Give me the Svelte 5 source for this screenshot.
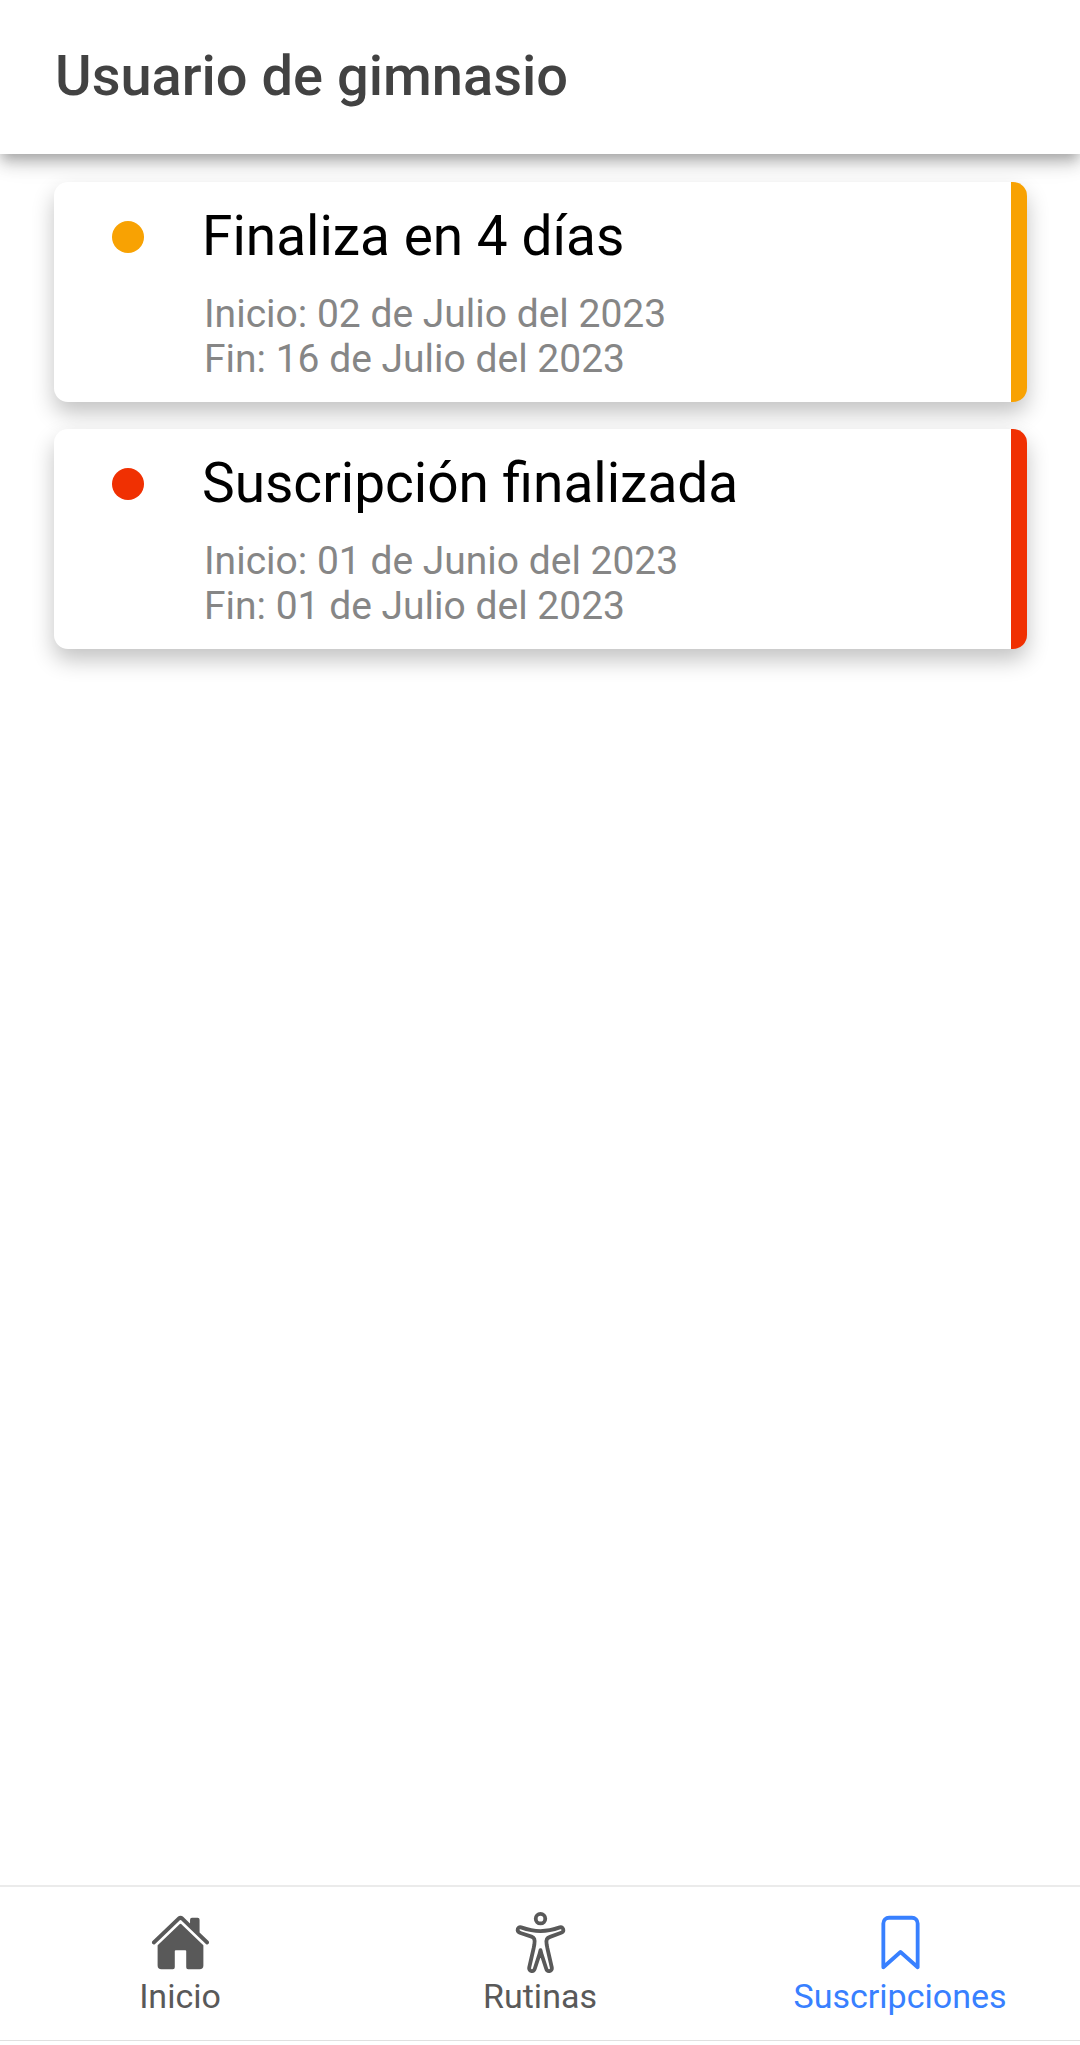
<script lang="ts">
  type Status = 'ending' | 'ended';

  const subscriptions: { status: Status; title: string; start: string; end: string }[] = [
    {
      status: 'ending',
      title: 'Finaliza en 4 días',
      start: '02 de Julio del 2023',
      end: '16 de Julio del 2023',
    },
    {
      status: 'ended',
      title: 'Suscripción finalizada',
      start: '01 de Junio del 2023',
      end: '01 de Julio del 2023',
    },
  ];
</script>

<div class="page">
  <header class="toolbar">
    <h1>Usuario de gimnasio</h1>
  </header>

  <main class="content">
    {#each subscriptions as item}
      <article class="card {item.status}">
        <span class="dot"></span>
        <div class="info">
          <h2>{item.title}</h2>
          <p>Inicio: {item.start}</p>
          <p>Fin: {item.end}</p>
        </div>
      </article>
    {/each}
  </main>

  <nav class="tabs">
    <a href="#inicio" class="tab">
      <svg viewBox="0 0 512 512" fill="currentColor" aria-hidden="true">
        <path d="M261.56 101.28a8 8 0 00-11.06 0L66.4 277.15a8 8 0 00-2.47 5.79L63.9 448a32 32 0 0032 32H192a16 16 0 0016-16V328a8 8 0 018-8h80a8 8 0 018 8v136a16 16 0 0016 16h96.06a32 32 0 0032-32V282.94a8 8 0 00-2.47-5.79z" />
        <path d="M490.91 244.15l-74.8-71.56V64a16 16 0 00-16-16h-48a16 16 0 00-16 16v32l-57.92-55.38C272.77 35.14 264.71 32 256 32c-8.68 0-16.72 3.14-22.14 8.63l-212.7 203.5c-6.22 6-7 15.87-1.34 22.37A16 16 0 0043 267.56L250.5 69.28a8 8 0 0111.06 0l207.52 198.28a16 16 0 0022.59-.44c6.14-6.36 5.63-16.86-.76-22.97z" />
      </svg>
      <span>Inicio</span>
    </a>
    <a href="#rutinas" class="tab">
      <svg viewBox="0 0 512 512" fill="none" stroke="currentColor" stroke-width="32" stroke-linejoin="round" aria-hidden="true">
        <circle cx="256" cy="56" r="40" />
        <path d="M204.23 274.44c2.9-18.06 4.2-35.52-.5-47.59-4-10.38-12.7-16.19-23.2-20.15L88 176.76c-12-4-23.21-10.7-24-23.94-1-17 14-28 29-24 0 0 88 31.14 163 31.14s162-31 162-31c18-5 30 9 30 23.79 0 14.21-11 19.21-24 23.94l-88 31.91c-8 3-21 9-26 18.18-6 10.75-5 29.53-2.1 47.59l5.9 29.63 37.41 163.9c2.8 13.15-6.3 25.44-19.4 27.74S308 489 304.12 476.28l-37.56-115.93q-2.71-8.34-4.8-16.87L256 320l-5.3 21.65q-2.52 10.35-5.8 20.48L208 476.18c-4 12.85-14.5 21.75-27.6 19.46s-22.4-15.59-19.46-27.74l37.39-163.83z" />
      </svg>
      <span>Rutinas</span>
    </a>
    <a href="#suscripciones" class="tab active" aria-current="page">
      <svg viewBox="0 0 512 512" fill="none" stroke="currentColor" stroke-width="32" stroke-linejoin="round" stroke-linecap="round" aria-hidden="true">
        <path d="M352 48H160a48 48 0 00-48 48v368l144-128 144 128V96a48 48 0 00-48-48z" />
      </svg>
      <span>Suscripciones</span>
    </a>
  </nav>
</div>

<style>
  :global(body) {
    background: #fff;
  }

  .page {
    display: flex;
    flex-direction: column;
    min-height: 100vh;
    font-family: Roboto, 'Liberation Sans', sans-serif;
  }

  h1,
  h2,
  p {
    margin: 0;
  }

  .toolbar {
    padding: 44px 55px 46px;
    background: #fff;
    box-shadow:
      0 6px 11px -3px rgba(0, 0, 0, 0.2),
      0 11px 14px 0 rgba(0, 0, 0, 0.14),
      0 3px 28px 0 rgba(0, 0, 0, 0.12);
  }

  h1 {
    color: #424242;
    font-size: 56px;
    font-weight: 500;
    line-height: 64px;
  }

  .content {
    flex: 1;
    display: flex;
    flex-direction: column;
    gap: 27px;
    padding: 28px 53px 28px 54px;
  }

  .card {
    display: flex;
    align-items: flex-start;
    gap: 58px;
    padding: 22px 43px 20px 58px;
    border-right: 16px solid var(--status);
    border-radius: 14px;
    background: #fff;
    box-shadow: 0 11px 22px rgba(0, 0, 0, 0.24);
  }

  .ending {
    --status: #f8a203;
  }

  .ended {
    --status: #f03002;
  }

  .dot {
    flex: none;
    width: 32px;
    height: 32px;
    margin-top: 17px;
    border-radius: 50%;
    background: var(--status);
  }

  h2 {
    margin-bottom: 24px;
    color: #000;
    font-size: 55px;
    font-weight: 400;
    line-height: 64px;
  }

  p {
    padding-left: 2px;
    color: #868686;
    font-size: 39px;
    line-height: 45px;
  }

  .tabs {
    display: grid;
    grid-template-columns: repeat(3, 1fr);
    margin-bottom: 4px;
    border-top: 2px solid #ebebeb;
    border-bottom: 1px solid #e0e0e0;
    background: #fff;
  }

  .tab {
    display: flex;
    flex-direction: column;
    align-items: center;
    gap: 3px;
    padding: 25px 0 24px;
    color: #595959;
    font-size: 34px;
    line-height: 40px;
    text-decoration: none;
  }

  .tab svg {
    width: 61px;
    height: 61px;
    overflow: visible;
  }

  .active {
    color: #3880ff;
  }
</style>
